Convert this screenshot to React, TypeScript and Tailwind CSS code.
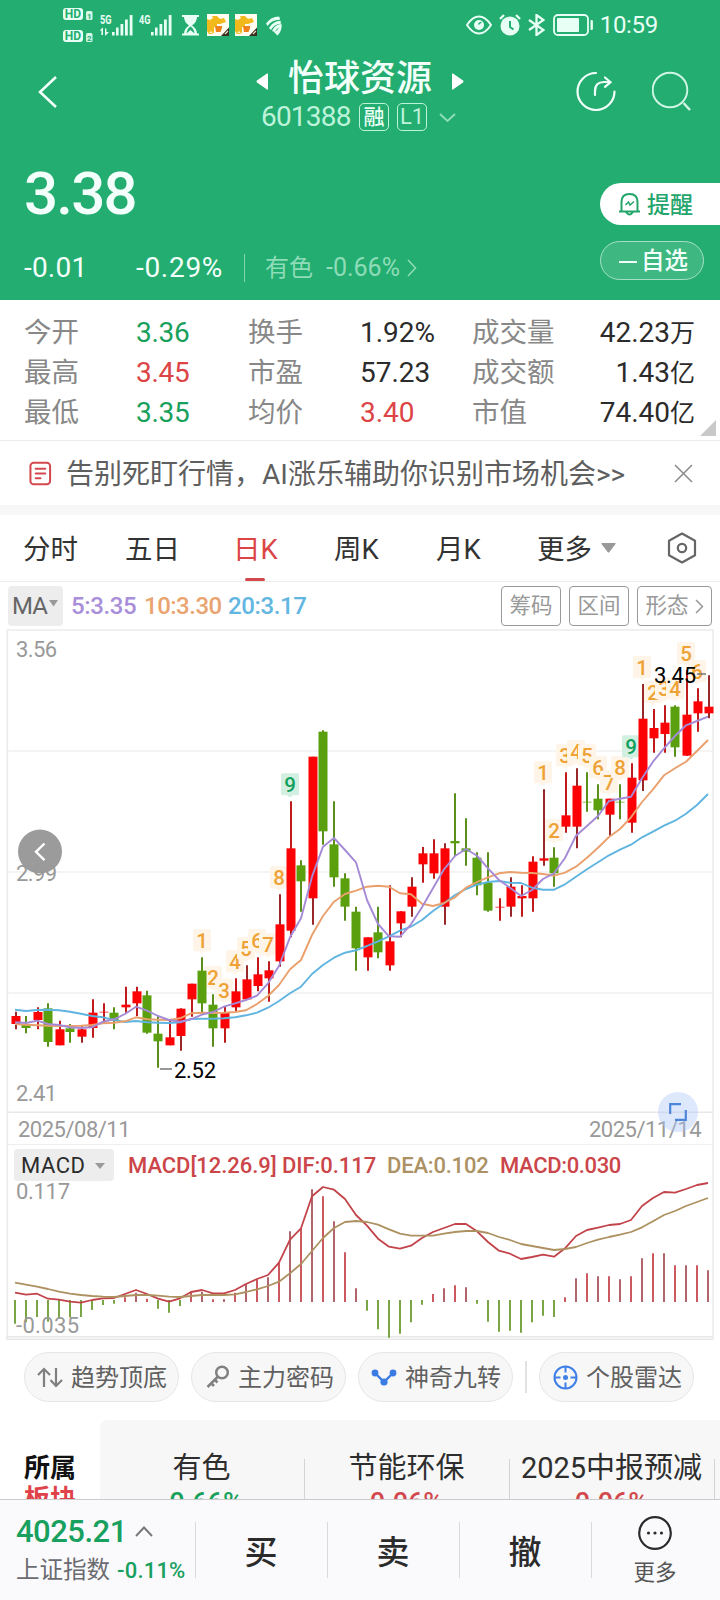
import type { ReactNode } from 'react';

type Candle = [up: 0 | 1, high: number, top: number, bottom: number, low: number];

/* Pixel geometry: every trading day occupies 11px, the first one at x = 15. */
const dayX = (i: number) => 15 + i * 11;

/* Vertical values are stored in thirds of a pixel, relative to a base line. */
const scale = (base: number, rows: number[]) => rows.map((v) => base + v / 3);
const bars = (base: number, rows: Candle[]): Candle[] =>
  rows.map(([up, h, t, b, l]) => [up, base + h / 3, base + t / 3, base + b / 3, base + l / 3]);

const candles: Candle[] = [
  ...bars(880, [
    [1, 395, 408, 432, 448], [0, 408, 432, 444, 460], [1, 382, 396, 420, 448], [0, 370, 385, 486, 500],
    [1, 422, 448, 496, 496], [0, 432, 445, 456, 488], [1, 435, 448, 470, 488], [1, 358, 398, 444, 473],
    [1, 370, 395, 398, 430], [0, 382, 398, 420, 448], [1, 320, 374, 382, 398], [1, 320, 334, 370, 408],
    [0, 332, 346, 458, 461], [0, 406, 461, 484, 563], [1, 422, 472, 496, 496], [1, 385, 386, 468, 512],
    [1, 311, 311, 358, 410], [0, 232, 272, 370, 396], [0, 343, 374, 445, 500], [1, 380, 398, 445, 488],
    [1, 295, 334, 382, 394],
  ]),
  ...bars(700, [
    [1, 796, 838, 898, 900], [1, 772, 823, 858, 874], [1, 784, 811, 835, 905], [1, 583, 673, 784, 800],
    [1, 304, 445, 692, 712], [0, 481, 496, 544, 635], [1, 170, 170, 595, 674], [0, 91, 95, 394, 434],
    [0, 304, 433, 532, 560], [0, 520, 535, 620, 662], [0, 620, 635, 745, 812], [1, 712, 712, 772, 812],
    [0, 620, 697, 757, 775], [1, 556, 724, 796, 812], [1, 634, 634, 670, 712], [1, 532, 560, 620, 650],
    [1, 441, 460, 493, 548], [1, 418, 460, 520, 536], [1, 430, 445, 620, 674], [0, 280, 423, 430, 468],
    [0, 355, 445, 455, 497], [0, 457, 473, 556, 586], [0, 457, 548, 632, 635], [1, 595, 620, 623, 662],
    [1, 532, 560, 620, 650], [1, 556, 588, 595, 650], [1, 469, 485, 595, 635], [1, 268, 475, 482, 497],
    [0, 442, 473, 520, 560], [1, 217, 346, 380, 398], [1, 205, 257, 380, 445], [0, 217, 305, 308, 335],
    [0, 253, 296, 331, 358], [1, 296, 296, 344, 407], [0, 253, 305, 308, 358], [1, 190, 233, 368, 398],
  ]),
  ...bars(630, [
    [1, 162, 266, 451, 483], [1, 237, 294, 325, 368], [1, 226, 278, 312, 368], [0, 226, 230, 352, 380],
    [1, 120, 254, 377, 377], [1, 175, 214, 250, 305], [1, 136, 230, 250, 265],
  ]),
];

const ma5 = [
  ...scale(880, [427, 429, 422, 432, 435, 442, 444, 442, 425, 418, 402, 380, 392, 408, 420, 425, 418, 404, 396, 380, 370]),
  ...scale(700, [
    900, 887, 850, 798, 712, 655, 530, 440, 414, 450, 487, 600, 672, 709, 710, 673, 622, 565, 508, 468, 447, 467, 505, 540,
    563, 588, 570, 537, 520, 474, 407, 378, 348, 303, 296, 290, 235, 185, 145, 108, 76, 63, 50,
  ]),
];
const ma10 = [
  ...scale(880, [432, 434, 436, 437, 438, 438, 437, 435, 430, 428, 424, 412, 418, 419, 420, 415, 400, 398, 399, 398, 396]),
  ...scale(700, [
    931, 912, 888, 855, 808, 780, 705, 648, 605, 582, 572, 560, 557, 560, 580, 583, 611, 618, 609, 592, 563, 546, 532, 520,
    516, 518, 519, 522, 527, 518, 500, 473, 443, 411, 387, 352, 306, 268, 226, 205, 185, 153, 120,
  ]),
];
const ma20 = [
  ...scale(880, [389, 393, 390, 389, 391, 395, 401, 408, 412, 420, 426, 423, 427, 428, 429, 427, 417, 416, 416, 415, 412]),
  ...scale(700, [
    946, 938, 923, 903, 880, 860, 822, 795, 773, 758, 751, 738, 724, 709, 692, 680, 660, 633, 610, 585, 567, 554, 546, 543,
    548, 549, 563, 569, 569, 553, 530, 508, 487, 466, 449, 434, 412, 395, 377, 362, 341, 315, 282,
  ]),
];

const histogram = scale(1080, [
  731, 727, 711, 725, 716, 711, 711, 690, 675, 671, 652, 638, 656, 686, 698, 678, 638, 635, 658, 658, 638, 612, 598, 592,
  547, 454, 445, 328, 349, 424, 517, 625, 692, 748, 773, 761, 727, 674, 642, 625, 616, 622, 671, 725, 755, 752, 758, 727,
  707, 711, 652, 595, 580, 589, 589, 598, 589, 535, 520, 520, 556, 556, 556, 571,
]);
const dif = scale(1080, [
  638, 644, 641, 656, 659, 665, 668, 660, 655, 654, 642, 630, 642, 656, 665, 655, 636, 630, 640, 640, 630, 612, 597, 585,
  548, 479, 445, 349, 321, 329, 357, 405, 437, 476, 500, 506, 497, 474, 456, 444, 432, 432, 454, 486, 512, 521, 537, 531,
  524, 530, 505, 468, 450, 443, 435, 432, 420, 378, 354, 336, 338, 327, 315, 309,
]);
const dea = scale(1080, [
  608, 614, 620, 627, 635, 641, 645, 648, 650, 651, 648, 645, 645, 647, 650, 651, 648, 645, 645, 645, 643, 636, 628, 618,
  605, 580, 552, 513, 474, 444, 426, 423, 426, 434, 448, 461, 467, 467, 467, 461, 456, 453, 453, 459, 471, 480, 492, 498,
  504, 510, 507, 501, 489, 479, 471, 464, 456, 442, 424, 405, 393, 378, 366, 354,
]);

const line = (ys: number[]) => ys.map((y, i) => `${dayX(i)},${y.toFixed(1)}`).join(' ');

const counts: [index: number, label: number][] = [
  [17, 1], [18, 2], [19, 3], [20, 4], [21, 5], [22, 6], [23, 7], [24, 8], [25, 9],
  [48, 1], [49, 2], [50, 3], [51, 4], [52, 5], [53, 6], [54, 7], [55, 8], [56, 9],
  [57, 1], [58, 2], [59, 3], [60, 4], [61, 5], [62, 6],
];

function AxisText({ x, y, w, children, fill = '#999' }: { x: number; y: number; w: number; children: string; fill?: string }) {
  return (
    <text x={x} y={y} textLength={w} fontSize="22" fill={fill}>
      {children}
    </text>
  );
}

function KLineChart() {
  return (
    <svg className="block" width="720" height="484" viewBox="0 629 720 484">
      {[751, 872, 993].map((y) => (
        <line key={y} x1="8" x2="713" y1={y} y2={y} stroke="#f1f1f1" strokeWidth="1.6" />
      ))}
      <path d="M7.3 1113V630H713V1113" fill="none" stroke="#ebebeb" strokeWidth="1.6" />
      <line x1="7" x2="713" y1="1112.3" y2="1112.3" stroke="#e8e8e8" strokeWidth="1.6" />
      <circle cx="40" cy="851.5" r="22" fill="#9b9b9b" />
      <path d="M44.5 843.5l-8.500 8.300 8.500 8.300" fill="none" stroke="#fff" strokeWidth="2.4" />
      {counts.map(([i, n]) => {
        const top = candles[i][1] - 28;
        const x = dayX(i);
        const done = n === 9;
        return (
          <g key={i}>
            <path
              d={`M${x - 9} ${top + 1.500}q0-1.500 1.500-1.500h15q1.500 0 1.500 1.500v19q0 1.500-1.500 1.500h-4.500l-3 2.500-3-2.500h-4.500q-1.500 0-1.500-1.500z`}
              fill={done ? '#d3efe1' : '#fef4e7'}
            />
            <text x={x} y={top + 19} fontSize="20.5" fontWeight="500" textAnchor="middle" fill={done ? '#10a05c' : '#eea236'}>
              {n}
            </text>
          </g>
        );
      })}
      {candles.map(([up, high, top, bottom, low], i) => {
        const x = dayX(i) + (up ? 1 : 0);
        const doji = bottom - top < 1.5;
        return (
          <g key={i}>
            <line x1={x} x2={x} y1={high} y2={low} stroke={up ? (i % 3 ? '#c01a1c' : '#98282a') : '#5b8f1c'} strokeWidth="2" />
            <rect
              x={x - 4.5}
              y={top}
              width="9"
              height={Math.max(bottom - top, 1)}
              fill={up ? '#fd0205' : '#5aa00e'}
              opacity={doji ? 0.7 : 1}
            />
          </g>
        );
      })}
      <g fill="none" strokeWidth="1.9" strokeLinejoin="round">
        <polyline points={line(ma20)} stroke="#5fb4e0" />
        <polyline points={line(ma10)} stroke="#eaa06c" />
        <polyline points={line(ma5)} stroke="#a58bd6" />
      </g>
      <AxisText x={16} y={657} w={41}>3.56</AxisText>
      <AxisText x={16} y={881} w={41}>2.99</AxisText>
      <AxisText x={16} y={1101} w={41}>2.41</AxisText>
      <path d="M160 1069h12M697 674h9" stroke="#777" strokeWidth="1.6" />
      <AxisText x={174} y={1078} w={42} fill="#000">2.52</AxisText>
      <AxisText x={654} y={682.5} w={42} fill="#000">3.45</AxisText>
    </svg>
  );
}

function MacdChart() {
  return (
    <svg className="block overflow-visible" width="720" height="158" viewBox="0 1182 720 158">
      <path d="M7.3 1113V1338M713 1113V1338" fill="none" stroke="#ebebeb" strokeWidth="1.6" />
      <path d="M6 1336.800H713M6 1339.300H714" fill="none" stroke="#e8e8e8" strokeWidth="1.4" />
      {histogram.map((y, i) => {
        const down = y > 1300.6;
        return (
          <line
            key={i}
            x1={dayX(i)}
            x2={dayX(i)}
            y1={down ? 1300 : 1302}
            y2={y}
            stroke={down ? '#6b9c30' : i % 2 ? '#a8555a' : '#c6484e'}
            strokeWidth="1.8"
          />
        );
      })}
      <g fill="none" strokeWidth="1.8" strokeLinejoin="round">
        <polyline points={line(dif)} stroke="#c2444a" />
        <polyline points={line(dea)} stroke="#ad9160" />
      </g>
      <AxisText x={16} y={1199} w={54}>0.117</AxisText>
      <AxisText x={16} y={1333} w={63}>-0.035</AxisText>
    </svg>
  );
}

function Hd({ n }: { n: string }) {
  return (
    <svg width="31" height="12" viewBox="0 0 31 12" className="overflow-visible">
      <rect width="20" height="12" rx="3" fill="#e8fff5" />
      <text x="10" y="10.300" fontSize="12" fontWeight="700" textAnchor="middle" fill="#23ad70">HD</text>
      <rect x="23" y="3" width="6.500" height="9" rx="1.500" fill="#d5f7e7" />
      <text x="26.200" y="10.500" fontSize="8" fontWeight="700" textAnchor="middle" fill="#23ad70">{n}</text>
    </svg>
  );
}

function Signal({ label, arrows }: { label: string; arrows?: boolean }) {
  return (
    <svg width="34" height="21" viewBox="0 0 34 21" fill="#e8fff5" className="overflow-visible">
      <text x="0" y="9" fontSize="12" textLength="11.500" lengthAdjust="spacingAndGlyphs" fontWeight="700">{label}</text>
      {arrows && <path d="M0 15l3-2.500v7.500h-1.600v-4.500H0zM5 13.500h1.400v3.500H9l-3.500 3.500H5z" />}
      <rect x="12" y="17" width="2.600" height="3.500" />
      <rect x="16" y="12.500" width="2.600" height="8" />
      <rect x="20.500" y="9" width="2.800" height="11.500" />
      <rect x="25" y="4.500" width="2.800" height="16" />
      <rect x="29.700" y="0" width="2.800" height="20.500" />
    </svg>
  );
}

function AppThumb() {
  return (
    <svg width="22" height="22" viewBox="0 0 22 22">
      <rect width="22" height="22" fill="#fffdf2" />
      <path d="M0 5l3 1 3-2-1-2 5 0 3 3 4-1 2 4-6 2-3 0 0 3h-3l0 6-3 1H2L0 17z" fill="#f2b91c" />
      <path d="M8 12h7v2l-1.500 4H9z" fill="#f08019" />
      <path d="M2 19l2-2 2 2z" fill="#fff6cf" />
      <path d="M22 13.500v8.500h-8z" fill="#3a2c1e" />
      <path d="M18 20l3-3" stroke="#e8ddc9" strokeWidth="1.200" />
    </svg>
  );
}

function StatusBar() {
  return (
    <div className="flex h-[50px] items-center pl-[63px] pr-[62px] text-[#e8fff5]">
      <div className="flex w-9 flex-col gap-[10px]">
        <Hd n="1" />
        <Hd n="2" />
      </div>
      <div className="flex flex-1 items-center">
        <div className="w-[40px] pl-px"><Signal label="5G" arrows /></div>
        <div className="w-[43px]"><Signal label="4G" /></div>
        <svg width="17" height="21" viewBox="0 0 17 21" fill="currentColor">
          <path d="M0 0h17v2h-2q0 5-5 8.500 5 3.500 5 8h2v2H0v-2h2q0-4.500 5-8Q2 7 2 2H0z" />
          <path d="M4.500 18.500q.5-5 4-7 3.500 2 4 7L8.500 15z" fill="#23ad70" />
        </svg>
        <div className="ml-2 flex gap-[6px]">
          <AppThumb />
          <AppThumb />
        </div>
        <svg className="ml-2" width="18" height="21" viewBox="0 0 18 21" fill="currentColor">
          <path d="M1 8.500Q6 1.500 14 1.500q1 1.500 1 3.200Q7 4.500 2.500 11zM4 13Q8 6 15.500 5.700q.6 1.500 .3 3Q9 9 6 15zM9 17q5-2 5.500-7l2-1.500q1 7-4 12z" />
          <path d="M7 16q2.500-6 8.500-7l-.5 3q-3 1-5.500 5z" />
        </svg>
      </div>
      <div className="flex items-center">
        <svg width="26" height="20" viewBox="0 0 26 20" fill="none" stroke="currentColor" strokeWidth="2">
          <path d="M1 10Q6.500 1.500 13 1.500T25 10Q19.500 18.500 13 18.500T1 10z" />
          <circle cx="13" cy="10" r="5" fill="currentColor" stroke="none" />
          <path d="M12.500 9.500q1-2.500 3-2" stroke="#23ad70" strokeWidth="1.500" />
        </svg>
        <svg className="ml-[7px]" width="22" height="22" viewBox="0 0 22 22" fill="none" stroke="currentColor" strokeWidth="2">
          <circle cx="11" cy="12" r="9.500" fill="currentColor" stroke="none" />
          <path d="M1 5l4-4M17 1l4 4" strokeWidth="2.400" />
          <path d="M11 7v6l3.500 2.500" stroke="#23ad70" />
        </svg>
        <svg className="ml-[7px]" width="17" height="22" viewBox="0 0 17 22" fill="none" stroke="currentColor" strokeWidth="2.300">
          <path d="M1 6l14.500 10-7 5V1l7 5L1 16" />
        </svg>
        <svg className="ml-2" width="42" height="22" viewBox="0 0 42 22">
          <rect x="1" y="1" width="34" height="20" rx="4" fill="none" stroke="currentColor" strokeWidth="1.800" />
          <rect x="4" y="4" width="22" height="14" rx="1" fill="currentColor" />
          <rect x="37.500" y="6" width="2.400" height="10" rx="1" fill="currentColor" />
        </svg>
        <span className="ml-[5px] text-2xl leading-none tracking-[-0.3px]">10:59</span>
      </div>
    </div>
  );
}

function Header() {
  return (
    <header className="h-[300px] bg-[#23ad70] text-[#f2fffa]">
      <StatusBar />
      <div className="flex h-[86px] items-start">
        <div className="w-[256px] pl-[38px] pt-[25px]">
          <svg width="20" height="34" viewBox="0 0 20 34" fill="none" stroke="currentColor" strokeWidth="2.600">
            <path d="M18 2L2 17l16 15" />
          </svg>
        </div>
        <div className="flex w-[208px] flex-col">
          <div className="flex h-[54px] items-center justify-between">
            <svg className="mt-2" width="12" height="17" viewBox="0 0 12 17" fill="#fff"><path d="M12 1v15q0 1-1 .4L1 9.500q-1-1 0-2L11 .6q1-.6 1 .4z" /></svg>
            <h1 className="pt-[3px] text-4xl font-medium leading-none">怡球资源</h1>
            <svg className="mt-2" width="12" height="17" viewBox="0 0 12 17" fill="#fff"><path d="M0 1v15q0 1 1 .4l10-6.900q1-1 0-2L1 .6Q0 0 0 1z" /></svg>
          </div>
          <div className="flex h-[26px] items-center pl-[5px] text-[#bdf3da]">
            <span className="w-[98px] text-[28px] leading-none tracking-[-0.8px]">601388</span>
            <span className="flex h-7 w-[30px] items-center justify-center rounded-[5px] border border-[#bdf3da] pt-px text-[21px] font-medium leading-none text-[#eafff6]">融</span>
            <span className="ml-2 flex h-7 w-[30px] items-center justify-center rounded-[5px] border border-[#bdf3da] text-[22px] leading-none">L1</span>
            <svg className="ml-3 shrink-0" width="17" height="9" viewBox="0 0 17 9" fill="none" stroke="#8fe0bb" strokeWidth="1.800"><path d="M1 1l7.500 7L16 1" /></svg>
          </div>
        </div>
        <div className="flex flex-1 gap-9 pl-[112px] pt-[21px]">
          <svg width="40" height="41" viewBox="0 0 40 41" fill="none" stroke="currentColor" strokeWidth="2.200" strokeLinecap="round">
            <path d="M20 2a18.500 18.500 0 1 0 18.500 18.500" />
            <path d="M19 24v-4q0-9 9-9h6M29 6.500l5.500 4.700-5.500 4.700" />
          </svg>
          <svg width="40" height="41" viewBox="0 0 40 41" fill="none" stroke="#d0f6e5" strokeWidth="1.900">
            <circle cx="18" cy="19" r="17.300" />
            <path d="M31.500 32l6.500 7" strokeWidth="2.500" />
          </svg>
        </div>
      </div>
      <div className="flex h-[164px]">
        <div className="flex flex-1 flex-col pl-6">
          <div className="flex h-[113px] items-center pt-[3px] text-[60px] font-medium leading-none tracking-[-1.8px]">3.38</div>
          <div className="flex h-[36px] items-center pt-px text-[28px] leading-none">
            <span className="w-[112px] tracking-[0.2px]">-0.01</span>
            <span className="w-[108px] tracking-[0.7px]">-0.29%</span>
            <span className="h-7 w-px bg-[#7fd5ac]" />
            <span className="ml-5 w-[61px] text-2xl leading-none text-[#8edcb8]">有色</span>
            <span className="text-[25px] leading-none text-[#8edcb8]">-0.66%</span>
            <svg className="ml-[7px]" width="10" height="18" viewBox="0 0 10 18" fill="none" stroke="#8edcb8" strokeWidth="1.600"><path d="M1 1l7.500 8L1 17" /></svg>
          </div>
        </div>
        <div className="flex w-[120px] flex-col gap-4 pt-[47px]">
          <div className="flex h-[42px] items-center rounded-l-[21px] bg-white pl-[18px] text-[#23a56b]">
            <svg width="23" height="24" viewBox="0 0 23 24" fill="none" stroke="currentColor" strokeWidth="2">
              <path d="M3.500 19V10q0-8 8-8t8 8v9M1 19.500h21M8 20q3.500 5 7 0" />
              <path d="M7.500 13l3-3 1.500 3 4-3.500" strokeWidth="1.500" />
            </svg>
            <span className="ml-[6px] pt-[3px] text-[23px] font-medium leading-none">提醒</span>
          </div>
          <div className="flex h-[39px] w-[104px] items-center rounded-full border border-[#a5e0c6] bg-[#3eb781] pl-[18px]">
            <span className="mt-[2px] h-[2px] w-[18px] bg-current" />
            <span className="ml-1 pt-[3px] text-[23.500px] font-medium leading-none">自选</span>
          </div>
        </div>
      </div>
    </header>
  );
}

const stats = [
  ['今开', '3.36', 'text-[#18a05c]', '换手', '1.92%', 'text-[#2b2b2b]', '成交量', '42.23', '万'],
  ['最高', '3.45', 'text-[#dc4446]', '市盈', '57.23', 'text-[#2b2b2b]', '成交额', '1.43', '亿'],
  ['最低', '3.35', 'text-[#18a05c]', '均价', '3.40', 'text-[#dc4446]', '市值', '74.40', '亿'],
];

function Stats() {
  return (
    <section className="relative h-[141px] border-b border-[#ececec] bg-white pl-6 pr-[25px] pt-3">
      {stats.map((r) => (
        <div key={r[0]} className="grid h-10 grid-cols-[112px_112px_112px_112px_1fr] items-center text-[27.500px] leading-none text-[#888]">
          <span className="pt-[2px]">{r[0]}</span>
          <span className={`pt-px text-[28px] tracking-[-0.3px] ${r[2]}`}>{r[1]}</span>
          <span className="pt-[2px]">{r[3]}</span>
          <span className={`pt-px text-[28px] ${r[5]}`}>{r[4]}</span>
          <span className="flex items-center justify-between">
            <span className="pt-[2px]">{r[6]}</span>
            <span className="flex items-center pt-px text-[28px] text-[#2b2b2b]">
              {r[7]}
              <span className="pt-px text-[25px]">{r[8]}</span>
            </span>
          </span>
        </div>
      ))}
      <svg className="absolute bottom-1 right-1" width="16" height="16" viewBox="0 0 16 16" fill="#c9c9c9"><path d="M16 0v16H0z" /></svg>
    </section>
  );
}

function Notice() {
  return (
    <section className="flex h-[64px] items-center bg-white pl-7">
      <svg className="ml-px" width="23" height="25" viewBox="0 0 24 25" fill="none" stroke="#d2484e" strokeWidth="2.100" strokeLinecap="round">
        <rect x="1.500" y="1.200" width="20.500" height="22.600" rx="3.500" />
        <path d="M7 7.500h10M7 12.500h10M7 17.500h5" />
      </svg>
      <span className="ml-[14px] flex-1 whitespace-nowrap pt-[4px] text-[28px] leading-none text-[#5f5f5f]">告别死盯行情，AI涨乐辅助你识别市场机会&gt;&gt;</span>
      <svg className="mr-[27px]" width="19" height="19" viewBox="0 0 19 19" fill="none" stroke="#888" strokeWidth="1.500"><path d="M1 1l17 17M18 1L1 18" /></svg>
    </section>
  );
}

function Tabs() {
  return (
    <nav className="flex h-[67px] items-center border-b border-[#ececec] bg-white pl-[23px] text-[27.500px] leading-none text-[#333]">
      <span className="w-[102px] pt-[4px]">分时</span>
      <span className="w-[108px] pt-[4px]">五日</span>
      <span className="relative flex h-full w-[101px] items-center pt-[4px] text-[#dc4446]">
        日K
        <span className="absolute bottom-0 left-[12px] h-[3px] w-5 rounded-full bg-[#d2484e]" />
      </span>
      <span className="w-[102px] pt-[4px]">周K</span>
      <span className="w-[101px] pt-[4px]">月K</span>
      <span className="pt-[4px]">更多</span>
      <svg className="ml-[9px]" width="15" height="10" viewBox="0 0 15 10" fill="#999"><path d="M1 0h13q1 0 .5 1L8 9.500H7L.5 1Q0 0 1 0z" /></svg>
      <svg className="ml-[51px]" width="30" height="32" viewBox="0 0 30 32" fill="none" stroke="#666" strokeWidth="2.200" strokeLinejoin="round">
        <path d="M15 1.500l13 7.200v14.600L15 30.500 2 23.300V8.700z" />
        <circle cx="15" cy="16" r="4.200" />
      </svg>
    </nav>
  );
}

function OutlineButton({ className, children }: { className: string; children: ReactNode }) {
  return (
    <span className={`flex h-10 items-center justify-center rounded-[4px] border-[1.500px] border-[#999] pt-px text-[21.500px] leading-none text-[#999] ${className}`}>
      {children}
    </span>
  );
}

function MaRow() {
  return (
    <div className="flex h-[47px] items-center bg-white pl-2 text-2xl leading-none">
      <span className="flex h-10 w-[55px] items-center rounded-[4px] bg-[#ededed] pl-1 pt-px tracking-[-1px] text-[#666]">
        MA
        <svg className="ml-[2px] mt-[-5px]" width="9" height="7" viewBox="0 0 9 7" fill="#999"><path d="M0 0h9L4.500 6.500z" /></svg>
      </span>
      <span className="ml-2 w-[73px] pt-px font-medium tracking-[-0.4px] text-[#a98fda]">5:3.35</span>
      <span className="w-[84px] pt-px font-medium tracking-[-0.5px] text-[#e9a46f]">10:3.30</span>
      <span className="flex-1 pt-px font-medium tracking-[-0.4px] text-[#62b6e2]">20:3.17</span>
      <div className="flex gap-2 pr-2">
        <OutlineButton className="w-[60px]">筹码</OutlineButton>
        <OutlineButton className="w-[60px]">区间</OutlineButton>
        <OutlineButton className="w-[75px]">
          形态
          <svg className="ml-[6px]" width="9" height="15" viewBox="0 0 9 15" fill="none" stroke="#999" strokeWidth="1.500"><path d="M1 1l6.500 6.500L1 14" /></svg>
        </OutlineButton>
      </div>
    </div>
  );
}

function Charts() {
  return (
    <section className="relative bg-white">
      <KLineChart />
      <div className="mx-[7px] flex h-8 items-center justify-between border-b-[1.500px] border-[#efefef] pl-[11px] pr-[12px] pt-[2px] text-[22px] leading-none tracking-[-0.500px] text-[#999]">
        <span>2025/08/11</span>
        <span>2025/11/14</span>
      </div>
      <div className="flex h-[37px] items-center pl-[14px] pt-[3px] text-[22px] leading-none">
        <span className="flex h-8 w-[100px] items-center rounded-[4px] bg-[#ededed] pl-[7px] pt-px tracking-[0.500px] text-[#2b2b2b]">
          MACD
          <svg className="ml-[10px]" width="10" height="6" viewBox="0 0 10 6" fill="#999"><path d="M0 0h10L5 6z" /></svg>
        </span>
        <span className="ml-[14px] w-[259px] pt-px font-medium tracking-[-0.050px] text-[#cb4549]">MACD[12.26.9] DIF:0.117</span>
        <span className="w-[113px] pt-px font-medium tracking-[-0.2px] text-[#ab9163]">DEA:0.102</span>
        <span className="pt-px font-medium tracking-[-0.350px] text-[#cb4549]">MACD:0.030</span>
      </div>
      <MacdChart />
      <div className="absolute left-[658px] top-[463px] flex size-10 items-center justify-center rounded-full bg-[#a9c6fa66]">
        <svg width="18" height="18" viewBox="0 0 18 18" fill="none" stroke="#4e86da" strokeWidth="2.200"><path d="M1.200 11V1.200H12M16.800 7v9.800H6" /></svg>
      </div>
    </section>
  );
}

function Chip({ icon, children }: { icon: ReactNode; children: ReactNode }) {
  return (
    <span className="flex h-[50px] w-[155px] items-center justify-end gap-2 whitespace-nowrap rounded-full border border-[#e6e6e6] bg-[#f7f7f7] pr-[11px] text-2xl leading-none text-[#606060]">
      {icon}
      <span className="pt-[2px]">{children}</span>
    </span>
  );
}

function Chips() {
  return (
    <section className="flex h-[80px] items-start bg-white pl-6 pt-3">
      <Chip
        icon={
          <svg width="26" height="21" viewBox="0 0 26 21" fill="none" stroke="#808080" strokeWidth="2.200"><path d="M7 20V2M1 8l6-6 6 6M19 1v18M13.500 13l5.500 6 6-6" /></svg>
        }
      >
        趋势顶底
      </Chip>
      <span className="w-3" />
      <Chip
        icon={
          <svg width="24" height="24" viewBox="0 0 24 24" fill="none" stroke="#808080" strokeWidth="2.500"><circle cx="16" cy="7.500" r="5.800" /><path d="M12 11.500L1.500 22M4.500 17.500l3.500 3.500M8.500 14.500l3 3" /></svg>
        }
      >
        主力密码
      </Chip>
      <span className="w-3" />
      <Chip
        icon={
          <svg width="26" height="17" viewBox="0 0 26 17" fill="#3b7be4"><path d="M4 4l9 9 9-9" fill="none" stroke="#3b7be4" strokeWidth="2.400" /><circle cx="4" cy="4" r="3.400" /><circle cx="22" cy="4" r="3.400" /><circle cx="13" cy="13" r="3.600" /></svg>
        }
      >
        神奇九转
      </Chip>
      <span className="mx-3 mt-[9px] h-8 w-[2px] bg-[#e2e2e2]" />
      <Chip
        icon={
          <svg width="25" height="25" viewBox="0 0 25 25" fill="none" stroke="#3f7fe6" strokeWidth="2"><circle cx="12.500" cy="12.500" r="11" /><path d="M12.500 1.500v6M12.500 17.500v6M1.500 12.500h6M17.500 12.500h6" /><circle cx="12.500" cy="12.500" r="2.500" fill="#3f7fe6" stroke="none" /></svg>
        }
      >
        个股雷达
      </Chip>
    </section>
  );
}

const sectors = [
  ['有色', '-0.66%', 'text-[#18a05c]'],
  ['节能环保', '0.06%', 'text-[#d2484e]'],
  ['2025中报预减', '0.06%', 'text-[#d2484e]'],
];

function Sectors() {
  return (
    <section className="flex h-[79px] overflow-hidden bg-white">
      <div className="w-[100px] shrink-0 pl-[24px] pt-[33px] text-[26px] font-bold leading-[31px] text-[#111]">
        所属
        <br />
        <span className="text-[#e0424a]">板块</span>
      </div>
      <div className="flex flex-1 overflow-hidden rounded-tl-lg bg-[#f7f7f7]">
        {sectors.map(([name, pct, color]) => (
          <div key={name} className="flex w-[205px] shrink-0">
            <div className="flex flex-1 flex-col items-center whitespace-nowrap pr-px pt-[31px] leading-none">
              <span className="text-[29px] leading-[34px] text-[#2e2e2e]">{name}</span>
              <span className={`mt-[4px] text-[27px] font-medium leading-[28px] ${color}`}>{pct}</span>
            </div>
            <span className="mt-[39px] w-px bg-[#d4d4d4]" />
          </div>
        ))}
      </div>
    </section>
  );
}

function TradeBar() {
  return (
    <footer className="flex h-[101px] border-t border-[#cbcbcd] bg-[#fafafc]">
      <div className="w-[195px] shrink-0 pl-4 pt-[14px]">
        <div className="flex h-[34px] items-center text-[31px] font-medium leading-none tracking-[-0.5px] text-[#18a05e]">
          4025.21
          <svg className="ml-[8px]" width="18" height="11" viewBox="0 0 18 11" fill="none" stroke="#777" strokeWidth="1.900"><path d="M1 10l8-8.500 8 8.500" /></svg>
        </div>
        <div className="mt-[8px] flex h-[28px] items-center whitespace-nowrap text-[23.500px] leading-none text-[#6a6a70]">
          <span className="pt-px">上证指数</span>
          <span className="ml-[7px] pt-px text-[22px] font-medium tracking-[0.2px] text-[#18a05e]">-0.11%</span>
        </div>
      </div>
      {['买', '卖', '撤'].map((t) => (
        <div key={t} className="flex w-[132px] shrink-0">
          <span className="mt-[22px] h-14 w-px bg-[#d9d9db]" />
          <span className="flex flex-1 items-center justify-center pr-px pt-[5px] text-[33px] font-medium leading-none text-[#2b2b2b]">{t}</span>
        </div>
      ))}
      <span className="mt-[22px] h-14 w-px bg-[#d9d9db]" />
      <div className="flex flex-1 flex-col items-center pr-[2px] pt-4">
        <svg width="34" height="34" viewBox="0 0 34 34" fill="#2b2b2b">
          <circle cx="17" cy="17" r="15.800" fill="none" stroke="#2b2b2b" strokeWidth="2.200" />
          <circle cx="10.500" cy="17" r="1.600" /><circle cx="17" cy="17" r="1.600" /><circle cx="23.500" cy="17" r="1.600" />
        </svg>
        <span className="mt-3 text-[21.500px] leading-none text-[#555]">更多</span>
      </div>
    </footer>
  );
}

export default function App() {
  return (
    <div className="flex h-[1600px] w-[720px] flex-col overflow-hidden bg-white font-[Roboto,'Noto_Sans_CJK_SC',sans-serif]">
      <Header />
      <Stats />
      <Notice />
      <div className="h-[10px] bg-[#f7f7f7]" />
      <Tabs />
      <MaRow />
      <Charts />
      <Chips />
      <Sectors />
      <TradeBar />
    </div>
  );
}
